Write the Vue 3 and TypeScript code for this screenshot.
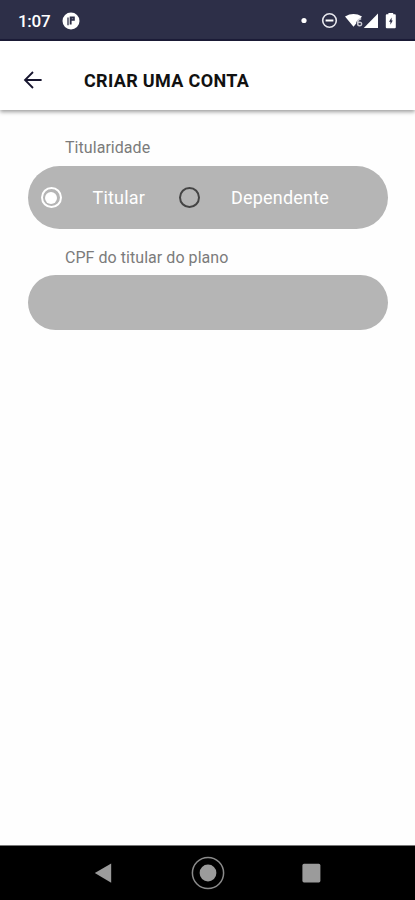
<script setup lang="ts">
import { ref } from 'vue'

type Holder = 'titular' | 'dependente'
const holder = ref<Holder>('titular')
const cpf = ref('')
</script>

<template>
  <div class="screen">
    <div class="status">
      <span class="clock">1:07</span>
      <svg class="app-badge" width="18" height="18" viewBox="0 0 18 18">
        <circle cx="9" cy="9" r="8.5" fill="#fff" />
        <path d="M5 5.4H7V13.2H5Z" fill="#777887" />
        <path d="M7.7 4.6H12.8V8.8H9.6V12.6H7.7Z" fill="#2d2f48" />
        <path d="M9.8 6.7H11.2" stroke="#85869a" stroke-width="1" />
      </svg>
      <svg class="system" width="100" height="20" viewBox="0 0 100 20">
        <circle cx="4" cy="9.5" r="2.6" fill="#fff" />
        <circle cx="29.5" cy="9.5" r="6.8" fill="none" stroke="#e8e8ee" stroke-width="1.6" />
        <path d="M25.6 9.5H33.4" stroke="#fff" stroke-width="2" />
        <path d="M45 5.4Q53.5 .6 62 5.4L59 9Q56.2 9.4 56 12.8L53.5 15.8Z" fill="#fff" />
        <path d="M61.2 7.8Q57.5 8.4 57.5 12Q57.6 14.8 59.5 14.8Q61.7 14.7 61.6 12.6Q61.2 10.6 57.8 11.7" fill="none" stroke="#c9c9d2" stroke-width="1.5" />
        <path d="M78 2.6V17H63.8Z" fill="#fff" />
        <path d="M88.4 3.2H86.8Q85.8 3.2 85.8 4.2V16.2Q85.8 17.2 86.8 17.2H94.8Q95.8 17.2 95.8 16.2V4.2Q95.8 3.2 94.8 3.2H93.2V1.9H88.4Z" fill="#fff" />
        <path d="M91.6 6.4L89 10.8H90.4V13.8L92.8 9.4H91.6Z" fill="#2d2f48" />
      </svg>
    </div>

    <header class="header">
      <svg class="back" width="20" height="20" viewBox="0 0 20 20">
        <path d="M18.6 10H2M10 2L2 10L10 18" fill="none" stroke="#17152f" stroke-width="1.8" />
      </svg>
      <h1 class="title">CRIAR UMA CONTA</h1>
    </header>

    <main class="form">
      <div class="label owner-label">Titularidade</div>
      <div class="pill options" role="radiogroup">
        <label class="option first">
          <input v-model="holder" type="radio" value="titular" />
          <span class="radio"></span>
          <span class="option-text">Titular</span>
        </label>
        <label class="option">
          <input v-model="holder" type="radio" value="dependente" />
          <span class="radio"></span>
          <span class="option-text">Dependente</span>
        </label>
      </div>
      <label class="label cpf-label" for="cpf">CPF do titular do plano</label>
      <input id="cpf" v-model="cpf" class="pill cpf" type="text" inputmode="numeric" />
    </main>

    <nav class="nav">
      <svg width="34" height="34" viewBox="0 0 34 34">
        <path d="M7.8 17L24.2 7.4V26.8Z" fill="#9b9b9b" />
      </svg>
      <svg width="34" height="34" viewBox="0 0 34 34">
        <circle cx="17" cy="17" r="15.6" fill="none" stroke="#8b8b8b" stroke-width="1.5" />
        <circle cx="17" cy="17" r="8.4" fill="#9b9b9b" />
      </svg>
      <svg width="34" height="34" viewBox="0 0 34 34">
        <rect x="7.4" y="7.8" width="18" height="18.6" rx="1.6" fill="#9b9b9b" />
      </svg>
    </nav>
  </div>
</template>

<style>
body {
  background: #fff;
}
</style>

<style scoped>
.screen {
  display: flex;
  flex-direction: column;
  height: 900px;
  background: #fefefe;
  font-family: Roboto, "Liberation Sans", sans-serif;
}
.status {
  display: flex;
  align-items: center;
  box-sizing: border-box;
  height: 41px;
  padding: 0 15px 0 18px;
  background: #2d2f48;
  border-bottom: 2px solid #1c1c38;
}
.clock {
  width: 44px;
  padding-top: 3px;
  color: #fff;
  font-size: 17px;
  font-weight: 500;
  line-height: 20px;
  letter-spacing: -0.3px;
}
.app-badge {
  margin-top: 2px;
}
.system {
  margin: 3px 0 0 auto;
}
.header {
  display: flex;
  align-items: center;
  box-sizing: border-box;
  height: 69px;
  padding-left: 23px;
  background: #fff;
  box-shadow: 0 2px 4px rgba(0, 0, 0, 0.38);
}
.back {
  margin-top: 9px;
}
.title {
  margin: 10px 0 0 41px;
  color: #111;
  font-size: 18px;
  font-weight: 700;
  line-height: 22px;
  letter-spacing: 0.34px;
  white-space: nowrap;
}
.form {
  display: flex;
  flex: 1;
  flex-direction: column;
  padding: 28px 27px 0 28px;
}
.label {
  padding-left: 37px;
  color: #7b7b7b;
  font-size: 16px;
  line-height: 20px;
  letter-spacing: 0.05px;
}
.owner-label {
  margin-bottom: 8px;
}
.cpf-label {
  margin: 19px 0 7px;
}
.pill {
  box-sizing: border-box;
  width: 100%;
  border: 0;
  background: #b5b5b5;
}
.options {
  display: flex;
  height: 63px;
  padding-left: 12.5px;
  border-radius: 32px;
}
.option {
  display: flex;
  align-items: center;
}
.first {
  width: 138.5px;
}
.option input {
  width: 0;
  height: 0;
  margin: 0;
  appearance: none;
}
.radio {
  display: flex;
  align-items: center;
  justify-content: center;
  box-sizing: border-box;
  width: 21px;
  height: 21px;
  border: 2px solid #444;
  border-radius: 50%;
}
.option input:checked + .radio {
  border-color: #fff;
}
.option input:checked + .radio::after {
  width: 12px;
  height: 12px;
  border-radius: 50%;
  background: #fff;
  content: "";
}
.option-text {
  margin-left: 31px;
  color: #fff;
  font-size: 18px;
  line-height: 24px;
  letter-spacing: 0.2px;
}
.cpf {
  height: 55px;
  padding: 0 37px;
  border-radius: 28px;
  outline: none;
  color: #fff;
  font: 18px Roboto, "Liberation Sans", sans-serif;
}
.nav {
  display: flex;
  align-items: center;
  box-sizing: border-box;
  justify-content: center;
  gap: 70px;
  height: 55px;
  border-top: 1px solid #777;
  background: #000;
}
</style>
